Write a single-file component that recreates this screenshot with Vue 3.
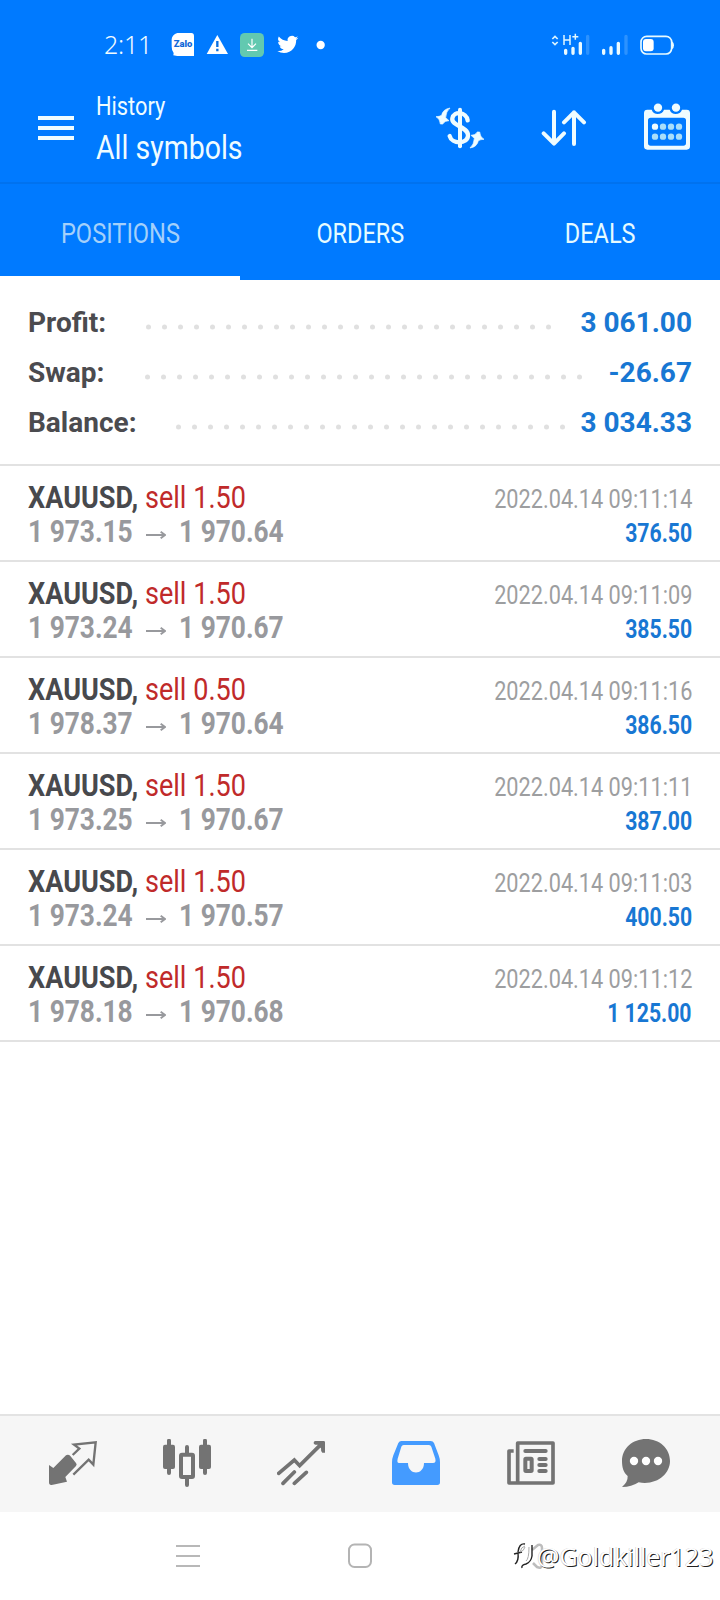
<script setup>
const summary = [
  { label: 'Profit:', value: '3 061.00', start: 118, dots: 26 },
  { label: 'Swap:', value: '-26.67', start: 117, dots: 28 },
  { label: 'Balance:', value: '3 034.33', start: 148, dots: 25 }
]
const deals = [
  { vol: '1.50', from: '1 973.15', to: '1 970.64', time: '2022.04.14 09:11:14', profit: '376.50' },
  { vol: '1.50', from: '1 973.24', to: '1 970.67', time: '2022.04.14 09:11:09', profit: '385.50' },
  { vol: '0.50', from: '1 978.37', to: '1 970.64', time: '2022.04.14 09:11:16', profit: '386.50' },
  { vol: '1.50', from: '1 973.25', to: '1 970.67', time: '2022.04.14 09:11:11', profit: '387.00' },
  { vol: '1.50', from: '1 973.24', to: '1 970.57', time: '2022.04.14 09:11:03', profit: '400.50' },
  { vol: '1.50', from: '1 978.18', to: '1 970.68', time: '2022.04.14 09:11:12', profit: '1 125.00' }
]
</script>

<template>
  <div class="screen">
    <div class="status">
      <span class="clock">2:11</span>
      <svg class="st-left" width="160" height="30" viewBox="240 30 480 90">
        <path fill="#fff" d="M262 39H304Q312 39 312 48V108H262L250 106L251 99Q245 92 245 80V58Q246 44 262 39Z" />
        <text x="251" y="81" font-family="Roboto" font-size="26" font-weight="900" fill="#1268d8" textLength="56" lengthAdjust="spacingAndGlyphs">Zalo</text>
        <path fill="#fff" d="M382 45L414 102H350Z" />
        <path stroke="#0a6fe0" stroke-width="7" d="M382 63V81M382 86V94" />
        <rect x="450" y="39" width="72" height="72" rx="14" fill="#62c9b0" />
        <path fill="none" stroke="#fff" stroke-width="3.5" d="M486 56V82M474 71L486 83L498 71M471 91H502" />
        <path fill="#fff" d="M625 53.500c-2.300 1-4.800 1.700-7.400 2 2.700-1.600 4.700-4.100 5.700-7.100-2.500 1.500-5.300 2.600-8.200 3.100a13 13 0 0 0-22.100 11.800c-10.700-.5-20.300-5.700-26.600-13.500a13 13 0 0 0 4 17.300c-2.100-.1-4.100-.7-5.900-1.600v.2c0 6.200 4.500 11.500 10.400 12.700-2 .5-3.900.6-5.900.2 1.700 5.200 6.500 9 12.200 9.100a26 26 0 0 1-19.200 5.400 37 37 0 0 0 20 5.900c24.200 0 37.300-20.100 36.500-38.800 2.500-1.800 4.700-4.100 6.500-6.700z" />
        <circle cx="692" cy="75" r="12.500" fill="#fff" />
      </svg>
      <svg class="st-right" width="130" height="30" viewBox="60 30 390 90">
        <path fill="none" stroke="#d9f4ff" stroke-width="5" d="M67 57L75 49L83 57M67 66L75 74L83 66" />
        <path fill="none" stroke="#e2f8ff" stroke-width="4.500" d="M102 45V75M120 45V75M102 60H120M127 50H145M136 41V59" />
        <g stroke-linecap="round" stroke-width="10" stroke="#eafaff">
          <path d="M107 91V100M129 85V100M151 70V100M221 91V100M243 83V100M265 70V100" />
          <path stroke="#2c92ff" d="M173 49V100M288 49V100" />
        </g>
        <rect x="333" y="49" width="92" height="53" rx="17" fill="none" stroke="#e9fbff" stroke-width="5" />
        <path fill="#e9fbff" d="M426 64Q432 68 432 76Q432 84 426 88Z" />
        <rect x="339" y="57" width="32" height="37" rx="9" fill="#fff" />
      </svg>
    </div>

    <header class="header">
      <div class="burger"><i></i><i></i><i></i></div>
      <div class="titles">
        <div class="sub"><span>History</span></div>
        <div class="main"><span>All symbols</span></div>
      </div>
      <svg class="ic-dollar" width="50" height="42" viewBox="75 51 150 126">
        <path fill="#effcff" d="M120 54Q108 64 107 83L117 92Q104 92 98 102H91Q90 86 78 80Q88 80 95 76Q98 58 120 54ZM180 174Q192 164 193 145L183 136Q196 136 202 126H209Q210 142 222 148Q212 148 205 152Q202 170 180 174Z" stroke="#effcff" stroke-width="2" />
        <path stroke="#effcff" stroke-width="12" stroke-linecap="round" d="M150 59V169" />
        <path fill="none" stroke="#effcff" stroke-width="13" stroke-linecap="round" d="M173 91C169 66 132 61 127 85C123 108 174 109 174 136C173 164 125 163 119 138" />
      </svg>
      <svg class="ic-sort" width="46" height="38" viewBox="393 57 138 114">
        <path fill="none" stroke="#effcff" stroke-width="12" stroke-linecap="round" stroke-linejoin="round" d="M432 65V160M401 130L432 161L462 130M492 162V67M462 97L492 67L522 97" />
      </svg>
      <svg class="ic-cal" width="46" height="47" viewBox="702 40 138 141">
        <path fill="#effcff" fill-rule="evenodd" d="M712 60H725Q730 73 743 73Q757 73 762 60H779Q784 73 797 73Q811 73 816 60H830Q840 60 840 70V170Q840 180 830 180H712Q702 180 702 170V70Q702 60 712 60ZM722 84Q714 84 714 92V160Q714 168 722 168H820Q828 168 828 160V92Q828 84 820 84Z" />
        <circle cx="744" cy="54" r="12.500" fill="#effcff" /><circle cx="798" cy="54" r="12.500" fill="#effcff" />
        <g fill="#a9defa">
          <circle cx="735" cy="111" r="9.500" fill="#effcff" /><circle cx="759" cy="111" r="9.500" /><circle cx="783" cy="111" r="9.500" /><circle cx="807" cy="111" r="9.500" />
          <circle cx="735" cy="141" r="9.500" /><circle cx="759" cy="141" r="9.500" /><circle cx="783" cy="141" r="9.500" /><circle cx="807" cy="141" r="9.500" />
        </g>
      </svg>
    </header>

    <nav class="tabs">
      <div class="tab active"><span>POSITIONS</span></div>
      <div class="tab"><span>ORDERS</span></div>
      <div class="tab"><span>DEALS</span></div>
    </nav>

    <section class="summary">
      <div v-for="s in summary" :key="s.label" class="srow">
        <span class="slabel" :style="{ width: s.start + 'px' }">{{ s.label }}</span>
        <svg :width="s.dots * 16" height="6">
          <circle v-for="n in s.dots" :key="n" :cx="n * 16 - 13.500" cy="3" r="2.500" fill="#e0e0e0" />
        </svg>
        <span class="svalue">{{ s.value }}</span>
      </div>
    </section>

    <section>
      <div v-for="d in deals" :key="d.time" class="deal">
        <div class="left">
          <div class="line"><span class="sym"><b>XAUUSD,</b> <em>sell {{ d.vol }}</em></span></div>
          <div class="line prices">
            <span class="price">{{ d.from }}</span>
            <svg width="20" height="12" viewBox="0 0 60 36"><path fill="none" stroke="#98999d" stroke-width="5.500" d="M0 18H56M44 8L57 18L44 28" /></svg>
            <span class="price">{{ d.to }}</span>
          </div>
        </div>
        <div class="right">
          <div class="line"><span class="time">{{ d.time }}</span></div>
          <div class="line"><span class="profit">{{ d.profit }}</span></div>
        </div>
      </div>
    </section>

    <div class="spacer"></div>

    <nav class="bottom">
      <svg viewBox="57 102 144 144">
        <path fill="#737373" d="M113 149Q118 149 121 153L138 174Q142 179 138 183L106 216L111 230L65 240Q57 241 57 232V180L70 189L108 151Z" />
        <path fill="none" stroke="#737373" stroke-width="7" d="M128 150L148 131L132 119L197 112L190 179L176 164L130 209" />
      </svg>
      <svg viewBox="399 102 144 144">
        <g fill="#737373"><rect x="399" y="119" width="36" height="73" rx="6" /><rect x="507" y="119" width="36" height="73" rx="6" /></g>
        <path stroke="#737373" stroke-width="12" stroke-linecap="round" d="M417 107V204M525 107V204M471 126V146M471 220V240" />
        <rect x="453" y="149" width="36" height="67" rx="3" fill="#f6f6f6" stroke="#737373" stroke-width="12" />
      </svg>
      <svg viewBox="741 102 144 144">
        <path fill="none" stroke="#737373" stroke-width="11" stroke-linecap="round" stroke-linejoin="miter" d="M746 205L793 165L809 182L876 115M759 235L793 201M793 235L829 202" />
        <path fill="#737373" d="M856 108H881Q885 108 885 112V143H877Q872 139 873 130L863 119Q851 120 851 113Q851 108 856 108Z" />
      </svg>
      <svg viewBox="96 102 144 144">
        <path fill="#449bff" fill-rule="evenodd" d="M124 108H212Q219 108 222 114L236 151Q240 161 240 172V232Q240 240 232 240H104Q96 240 96 232V172Q96 161 100 151L115 114Q118 108 124 108ZM131 120Q126 120 124 125L113 161Q110 174 117 174H144C144 212 192 212 192 174H219Q229 174 226 161L214 125Q212 120 207 120Z" />
      </svg>
      <svg viewBox="441 102 144 144">
        <path fill="none" stroke="#737373" stroke-width="11" stroke-linejoin="round" d="M473 114H579V234H473ZM461 138H447V234H473" />
        <path stroke="#737373" stroke-width="12" stroke-linecap="round" d="M496 138H557M538 162H557M538 180H557M538 198H557" />
        <rect x="496" y="161" width="19" height="37" rx="2" fill="#f6f6f6" stroke="#737373" stroke-width="12" />
      </svg>
      <svg viewBox="786 102 144 144">
        <path fill="#737373" d="M858 102C898 102 930 130 930 168C930 207 890 242 836 232Q815 246 786 246Q804 231 803 213C790 202 786 187 786 168C786 130 818 102 858 102Z" />
        <g fill="#fff"><circle cx="822" cy="168" r="12.500" /><circle cx="858" cy="168" r="12.500" /><circle cx="894" cy="168" r="12.500" /></g>
      </svg>
    </nav>

    <div class="system">
      <svg class="sys-menu" width="24" height="24"><path stroke="#b8b8b8" stroke-width="2" d="M0 2H24M0 12H24M0 22H24" /></svg>
      <svg class="sys-home" width="24" height="26"><rect x="1" y="1.500" width="22" height="22.500" rx="5.500" fill="none" stroke="#b4b4b4" stroke-width="2" /></svg>
      <svg class="sys-back" width="20" height="30"><path fill="none" stroke="#bdbdbd" stroke-width="2.500" stroke-linejoin="round" d="M4 8L10 3Q14 2 14 6V23Q14 27 9 25L5 21" /></svg>
      <div class="mark">
        <svg width="26" height="32" viewBox="0 0 26 32">
          <path fill="none" stroke="#222" stroke-width="1.400" d="M13 5Q7 4 6 13M2 15L10 13M6 14Q7 22 3 25M10 29Q9 26 14 25Q19 23 20 17V6" />
          <path fill="none" stroke="#aaa" stroke-width="1" d="M13 7Q9 8 8 13Q12 12 13 8M14 22Q17 20 17 8" />
        </svg>
        <span>@Goldkiller123</span>
      </div>
    </div>
  </div>
</template>

<style>
body { margin: 0; background: #fff; }
</style>

<style scoped>
.screen { width: 720px; height: 1600px; display: flex; flex-direction: column; background: #fff; font-family: Roboto, "Liberation Sans", sans-serif; overflow: hidden; }
svg { display: block; flex: none; }
span { white-space: nowrap; }
.status { height: 88px; background: #007aff; display: flex; align-items: flex-start; flex: none; }
.clock { margin: 26px 0 0 104px; width: 66px; font: 350 25px/36px "Noto Sans", sans-serif; color: #f2fcff; letter-spacing: -.2px; }
.st-left { margin-top: 30px; }
.st-right { margin: 30px 0 0 220px; }
.header { height: 94px; border-bottom: 2px solid #0072ef; background: #007aff; display: flex; align-items: flex-start; flex: none; color: #effcff; }
.burger { width: 36px; margin: 28px 0 0 38px; display: flex; flex-direction: column; gap: 6px; }
.burger i { height: 4px; background: #effcff; }
.titles { width: 339px; margin: 3px 0 0 22px; }
.titles span, .line span { display: inline-block; }
.sub { font-size: 26px; line-height: 30px; }
.main { font-size: 34px; line-height: 40px; margin-top: 6px; }
.titles span { transform: scaleX(.838); transform-origin: 0 50%; font-weight: 450; }
.ic-dollar { margin-top: 19px; }
.ic-sort { margin: 21px 0 0 56px; }
.ic-cal { margin: 15px 0 0 57px; }
.tabs { height: 96px; background: #007aff; display: flex; flex: none; }
.tab { flex: 1; box-sizing: border-box; border-bottom: 4px solid transparent; text-align: center; font-size: 28px; line-height: 100px; height: 96px; color: #e6fbff; }
.tab span { display: inline-block; transform: scaleX(.84); font-weight: 450; }
.tab.active { color: #a4d0fa; border-bottom-color: #fff; }
.tab.active span { font-weight: 400; transform: scaleX(.845); }
.summary { height: 184px; box-sizing: border-box; padding: 17px 28px 0; flex: none; }
.srow { height: 50px; display: flex; align-items: center; font-size: 28px; font-weight: 700; }
.srow svg { margin-top: 10px; }
.slabel { color: #4b4b4f; flex: none; }
.svalue { margin-left: auto; color: #1877d3; font-weight: 700; }
.deal { height: 96px; box-sizing: border-box; border-top: 2px solid #e2e2e2; padding: 14px 28px 0; display: flex; justify-content: space-between; }
.deal:last-child { height: 98px; border-bottom: 2px solid #e2e2e2; }
.line { height: 34px; line-height: 34px; white-space: nowrap; }
.left { font-size: 32px; width: 300px; }
.sym { transform: scaleX(.846); transform-origin: 0 50%; }
.sym b { font-weight: 700; color: #48494d; }
.sym em { font-style: normal; color: #c02a2a; }
.prices { display: flex; align-items: center; color: #98999d; font-weight: 700; }
.price { width: 105px; transform: scaleX(.822); transform-origin: 0 50%; }
.prices svg { margin: 8px 13px 0 13px; }
.right { font-size: 26px; text-align: right; padding-top: 2px; width: 300px; }
.right span { transform-origin: 100% 50%; }
.time { color: #9d9ea0; font-weight: 400; transform: scaleX(.835); }
.profit { color: #1877d3; font-weight: 700; transform: scaleX(.815); }
.spacer { flex: 1; }
.bottom { height: 98px; box-sizing: border-box; border-top: 2px solid #e3e3e3; background: #f6f6f6; display: flex; gap: 66px; padding: 23px 0 0 49px; flex: none; }
.bottom svg { width: 48px; height: 48px; }
.bottom svg:nth-child(n + 4) { margin-left: 1px; }
.system { height: 88px; display: flex; align-items: flex-start; flex: none; position: relative; }
.sys-menu { margin: 32px 0 0 176px; }
.sys-home { margin: 31px 0 0 148px; }
.sys-back { margin: 30px 0 0 156px; }
.mark { position: absolute; left: 512px; top: 27px; display: flex; }
.mark span { font: 400 25px/34px "Open Sans", sans-serif; color: #fff; text-shadow: 1px 1px .500px #222, -0.500px -0.500px 0 #ccc; margin-left: -1px; }
</style>
